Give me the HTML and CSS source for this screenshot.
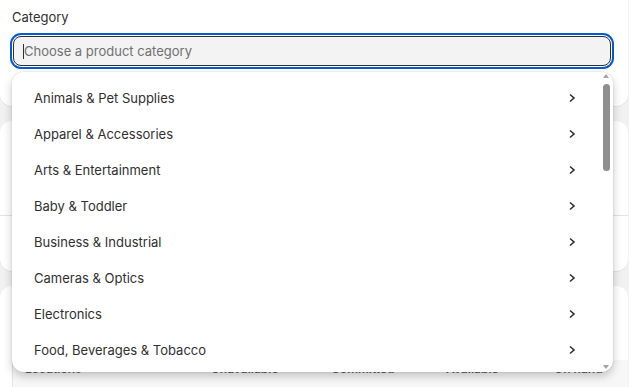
FILE: index.html
```html
<!DOCTYPE html>
<html>
<head>
<meta charset="utf-8">
<link rel="stylesheet" href="styles.css">
</head>
<body>
<div class="page">
  <section class="card card-top">
    <div class="label">Category</div>
    <div class="input"><span class="caret"></span><span class="placeholder">Choose a product category</span></div>
  </section>
  <section class="card card-mid">
    <div class="mid-a"></div>
    <div class="mid-b"></div>
  </section>
  <section class="card card-bottom">
    <div class="spacer"></div>
    <div class="table-head">
      <span class="th th-loc">Locations</span>
      <span class="th th-un">Unavailable</span>
      <span class="th th-co">Committed</span>
      <span class="th th-av">Available</span>
      <span class="th th-oh">On hand</span>
    </div>
  </section>
</div>

<div class="dropdown">
  <ul class="list">
    <li class="item"><span>Animals &amp; Pet Supplies</span><svg class="chev" viewBox="0 0 10 12"><path d="M3 2.5l4 3.5-4 3.5"/></svg></li>
    <li class="item"><span>Apparel &amp; Accessories</span><svg class="chev" viewBox="0 0 10 12"><path d="M3 2.5l4 3.5-4 3.5"/></svg></li>
    <li class="item"><span>Arts &amp; Entertainment</span><svg class="chev" viewBox="0 0 10 12"><path d="M3 2.5l4 3.5-4 3.5"/></svg></li>
    <li class="item"><span>Baby &amp; Toddler</span><svg class="chev" viewBox="0 0 10 12"><path d="M3 2.5l4 3.5-4 3.5"/></svg></li>
    <li class="item"><span>Business &amp; Industrial</span><svg class="chev" viewBox="0 0 10 12"><path d="M3 2.5l4 3.5-4 3.5"/></svg></li>
    <li class="item"><span>Cameras &amp; Optics</span><svg class="chev" viewBox="0 0 10 12"><path d="M3 2.5l4 3.5-4 3.5"/></svg></li>
    <li class="item"><span>Electronics</span><svg class="chev" viewBox="0 0 10 12"><path d="M3 2.5l4 3.5-4 3.5"/></svg></li>
    <li class="item"><span>Food, Beverages &amp; Tobacco</span><svg class="chev" viewBox="0 0 10 12"><path d="M3 2.5l4 3.5-4 3.5"/></svg></li>
    <li class="item"><span>Furniture</span><svg class="chev" viewBox="0 0 10 12"><path d="M3 2.5l4 3.5-4 3.5"/></svg></li>
  </ul>
  <div class="scrollbar">
    <span class="arrow arrow-up"></span>
    <span class="thumb"></span>
    <span class="arrow arrow-down"></span>
  </div>
</div>
</body>
</html>
```

FILE: styles.css
```css
html, body {
  margin: 0;
  padding: 0;
}
body {
  width: 629px;
  height: 387px;
  overflow: hidden;
  background: #f1f1f1;
  font-family: Inter, "Noto Sans", "Liberation Sans", sans-serif;
  color: #303030;
  position: relative;
}
.page {
  display: flex;
  flex-direction: column;
  gap: 15px;
  width: 628px;
}
.card {
  background: #fff;
  border-radius: 12px;
  box-shadow: 0 1px 0 rgba(0,0,0,0.06);
}
.card-top {
  border-radius: 0 0 12px 12px;
  height: 106px;
  box-sizing: border-box;
  padding: 9px 15px 0 11px;
  display: flex;
  flex-direction: column;
}
.label {
  font-size: 13px;
  line-height: 16px;
  padding-left: 1px;
  margin-bottom: 11px;
}
.input {
  height: 30px;
  box-sizing: border-box;
  margin: 0 2px;
  border: 1px solid #303030;
  border-radius: 8px;
  background: #f3f3f3;
  box-shadow: 0 0 0 1px #fff, 0 0 0 3px #005bd3;
  display: flex;
  align-items: center;
  padding-left: 9px;
  font-size: 13px;
}
.caret {
  width: 1px;
  height: 15px;
  background: #303030;
}
.placeholder {
  color: #707070;
}
.card-mid {
  height: 150px;
  display: flex;
  flex-direction: column;
}
.mid-a {
  height: 94px;
  border-bottom: 1px solid #e3e3e3;
}
.card-bottom {
  height: 120px;
  display: flex;
  flex-direction: column;
}
.spacer {
  height: 74px;
}
.table-head {
  margin-left: 12px;
  border-left: 1px solid #e3e3e3;
  background: #f7f7f7;
  height: 40px;
  position: relative;
  font-size: 12px;
  font-weight: 600;
  color: #616161;
}
.th { position: absolute; top: 1px; }
.th-loc { left: 12px; }
.th-un { left: 198px; }
.th-co { left: 318px; }
.th-av { left: 433px; }
.th-oh { left: 541px; }

.dropdown {
  position: absolute;
  left: 12px;
  top: 72px;
  width: 601px;
  height: 300px;
  background: #fff;
  border-radius: 12px;
  box-shadow: 0 0 0 1px rgba(0,0,0,0.04), 0 4px 10px rgba(0,0,0,0.22);
  overflow: hidden;
}
.list {
  list-style: none;
  margin: 0;
  padding: 8px 0 0 0;
}
.item {
  height: 36px;
  display: flex;
  align-items: center;
  justify-content: space-between;
  padding: 0 36px 0 22px;
  font-size: 13px;
  color: #303030;
}
.chev {
  width: 10px;
  height: 12px;
  fill: none;
  stroke: #303030;
  stroke-width: 1.6;
}
.scrollbar {
  position: absolute;
  right: 1px;
  top: 0;
  width: 11px;
  height: 100%;
}
.thumb {
  position: absolute;
  left: 2px;
  top: 12px;
  width: 7px;
  height: 87px;
  background: #8f8f8f;
  border-radius: 4px;
}
.arrow {
  position: absolute;
  left: 2px;
  width: 0;
  height: 0;
  border-left: 3.5px solid transparent;
  border-right: 3.5px solid transparent;
}
.arrow-up {
  top: 2px;
  border-bottom: 4px solid #a3a3a3;
}
.arrow-down {
  bottom: 3px;
  border-top: 4px solid #a3a3a3;
}
```
